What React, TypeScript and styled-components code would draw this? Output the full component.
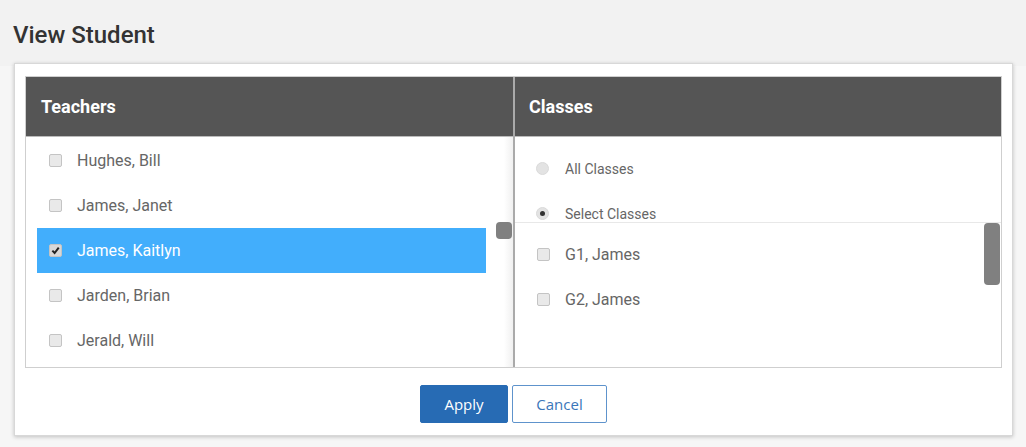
import React from 'react';
import styled, { createGlobalStyle } from 'styled-components';

// == data =========================================================================================
const teachers = [
  { name: 'Hughes, Bill', checked: false },
  { name: 'James, Janet', checked: false },
  { name: 'James, Kaitlyn', checked: true },
  { name: 'Jarden, Brian', checked: false },
  { name: 'Jerald, Will', checked: false },
];

const classes = [ 'G1, James', 'G2, James' ];

// == styles =======================================================================================
const GlobalStyle = createGlobalStyle`
  html, body {
    margin: 0;
    padding: 0;
    background: #f5f5f5;
  }
  body {
    font-family: Roboto, "Liberation Sans", sans-serif;
  }
`;

const Page = styled.div`
  width: 1026px;
  height: 447px;
  overflow: hidden;
  background: linear-gradient( #f2f2f2 0 66px, #f6f6f6 66px );
`;

const Header = styled.div`
  height: 63px;
  display: flex;
  align-items: center;
  padding-left: 13px;
  box-sizing: border-box;
`;

const Title = styled.h1`
  margin: 0;
  font-size: 24px;
  font-weight: 500;
  color: #333;
  padding-top: 6px;
`;

const Card = styled.div`
  margin-left: 14px;
  width: 999px;
  box-sizing: border-box;
  background: #fff;
  border: 1px solid #d8d8d8;
  box-shadow: 0 1px 4px rgba( 0, 0, 0, 0.22 );
  padding: 12px 10px 12px 10px;
`;

const Table = styled.div`
  display: grid;
  grid-template-columns: 487px 2px 1fr;
  border: 1px solid #cfcfcf;
  height: 292px;
  box-sizing: border-box;
`;

const Divider = styled.div`
  background: #aaa;
`;

const Column = styled.div`
  display: flex;
  flex-direction: column;
  min-width: 0;
  position: relative;
`;

const ColumnHead = styled.div<{ $pad: number }>`
  height: 60px;
  flex: none;
  background: #555;
  color: #fff;
  font-weight: 700;
  font-size: 18px;
  display: flex;
  align-items: center;
  padding-left: ${ ( p ) => p.$pad }px;
  border-bottom: 1px solid #bbb;
  box-sizing: border-box;
`;

const List = styled.div`
  flex: 1;
  position: relative;
  padding: 1px 27px 0 11px;
  overflow: hidden;
`;

const Track = styled.div`
  position: absolute;
  top: 0;
  right: 0;
  bottom: 0;
  width: 9px;
  background: linear-gradient( to right, #fff, #f0f0f0 );
`;

const Thumb = styled.div<{ $top: number; $height: number; $right: number }>`
  position: absolute;
  right: ${ ( p ) => p.$right }px;
  top: ${ ( p ) => p.$top }px;
  width: 16px;
  height: ${ ( p ) => p.$height }px;
  border-radius: 4px;
  background: #808080;
`;

const Row = styled.div<{ $selected?: boolean; $indent: number }>`
  height: 45px;
  display: flex;
  align-items: center;
  padding-left: ${ ( p ) => p.$indent }px;
  font-size: 16px;
  color: ${ ( p ) => p.$selected ? '#fff' : '#666' };
  background: ${ ( p ) => p.$selected ? '#42aefc' : 'transparent' };
  position: relative;
  z-index: 1;
`;

const Box = styled.span<{ $checked?: boolean }>`
  width: 13px;
  height: 13px;
  box-sizing: border-box;
  border-radius: 2px;
  border: 1px solid #c4c4c4;
  background: ${ ( p ) => p.$checked ? '#d8d8d8' : '#e9e9e9' };
  margin-right: 15px;
  flex: none;
  display: flex;
  align-items: center;
  justify-content: center;
`;

const RadioGroup = styled.div`
  padding-top: 9px;
  height: 85px;
  flex: none;
  box-sizing: border-box;
`;

const RadioRow = styled.div`
  height: 45px;
  display: flex;
  align-items: center;
  padding-left: 21px;
  font-size: 14px;
  color: #666;
`;

const Radio = styled.span<{ $on?: boolean }>`
  width: 13px;
  height: 13px;
  border-radius: 50%;
  background: #e3e3e3;
  border: 1px solid #dadada;
  box-sizing: border-box;
  margin-right: 16px;
  flex: none;
  display: flex;
  align-items: center;
  justify-content: center;
  &::after {
    content: '';
    display: ${ ( p ) => p.$on ? 'block' : 'none' };
    width: 5px;
    height: 5px;
    border-radius: 50%;
    background: #333;
  }
`;

const ClassList = styled.div`
  flex: 1;
  position: relative;
  border-top: 1px solid #e8e8e8;
  padding-top: 9px;
`;

const Actions = styled.div`
  display: flex;
  justify-content: center;
  gap: 4px;
  padding-top: 17px;
`;

const Button = styled.button<{ $primary?: boolean }>`
  height: 38px;
  padding: 0;
  width: ${ ( p ) => p.$primary ? 88 : 95 }px;
  font-family: "Open Sans", "Liberation Sans", sans-serif;
  font-size: 15px;
  border-radius: 2px;
  cursor: pointer;
  border: 1px solid ${ ( p ) => p.$primary ? '#276bb4' : '#5e93cc' };
  background: ${ ( p ) => p.$primary ? '#276bb4' : '#fff' };
  color: ${ ( p ) => p.$primary ? '#fff' : '#3a76b9' };
`;

// == components ===================================================================================
const Check = () => (
  <svg width="9" height="9" viewBox="0 0 10 10">
    <path d="M1.5 5.2 L4 7.8 L8.6 1.8" fill="none" stroke="#222" strokeWidth="2.2" />
  </svg>
);

const App = (): JSX.Element => (
  <Page>
    <GlobalStyle />
    <Header>
      <Title>View Student</Title>
    </Header>
    <Card>
      <Table>
        <Column>
          <ColumnHead $pad={ 15 }>Teachers</ColumnHead>
          <List>
            <Track />
            <Thumb $top={ 85 } $height={ 17 } $right={ 1 } />
            { teachers.map( ( t ) => (
              <Row key={ t.name } $selected={ t.checked } $indent={ 12 }>
                <Box $checked={ t.checked }>{ t.checked && <Check /> }</Box>
                { t.name }
              </Row>
            ) ) }
          </List>
        </Column>
        <Divider />
        <Column>
          <ColumnHead $pad={ 14 }>Classes</ColumnHead>
          <RadioGroup>
            <RadioRow><Radio />All Classes</RadioRow>
            <RadioRow><Radio $on />Select Classes</RadioRow>
          </RadioGroup>
          <ClassList>
            <Thumb $top={ 0 } $height={ 62 } $right={ 1 } />
            { classes.map( ( c ) => (
              <Row key={ c } $indent={ 22 }>
                <Box>{ null }</Box>
                { c }
              </Row>
            ) ) }
          </ClassList>
        </Column>
      </Table>
      <Actions>
        <Button $primary>Apply</Button>
        <Button>Cancel</Button>
      </Actions>
    </Card>
  </Page>
);

export default App;
